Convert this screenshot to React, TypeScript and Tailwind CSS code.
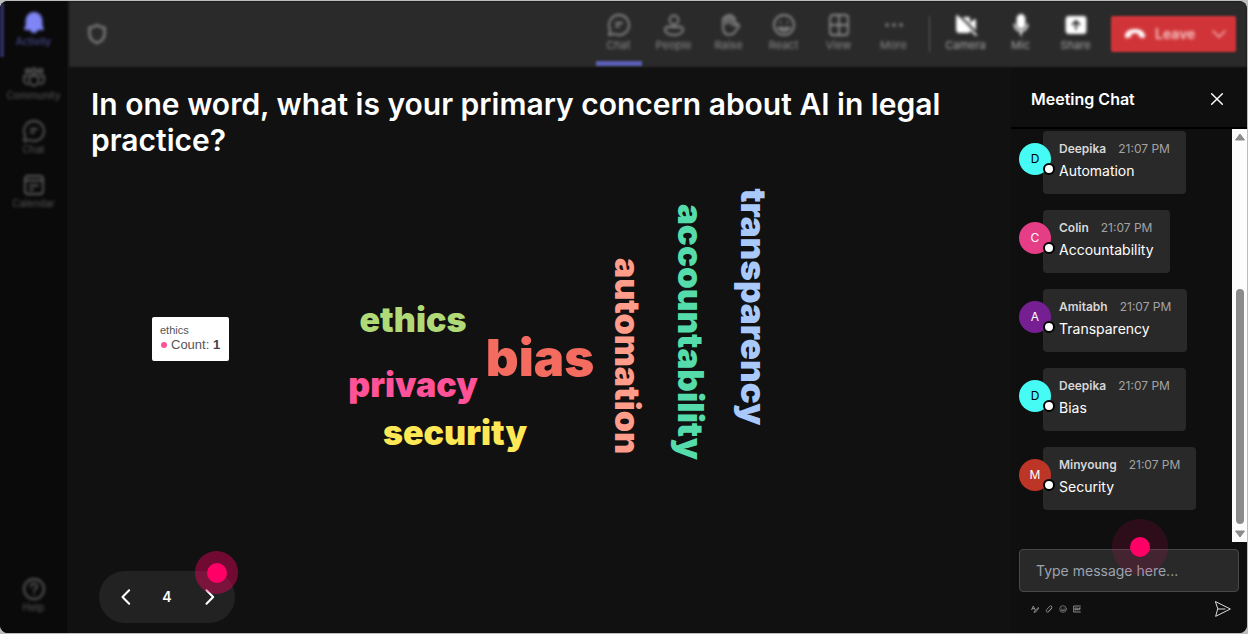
import { ReactNode, useState } from 'react'

type Message = { name: string; text: string; avatar: string }

const messages: Message[] = [
	{ name: 'Deepika', text: 'Automation', avatar: 'bg-[#45fbf3] text-black' },
	{ name: 'Colin', text: 'Accountability', avatar: 'bg-[#e63e86] text-white' },
	{ name: 'Amitabh', text: 'Transparency', avatar: 'bg-[#751f92] text-white' },
	{ name: 'Deepika', text: 'Bias', avatar: 'bg-[#45fbf3] text-black' },
	{ name: 'Minyoung', text: 'Security', avatar: 'bg-[#bd3526] text-white' },
]

// x and y are the centre of each word on its baseline
const words = [
	{ text: 'ethics', x: 322, y: 174, size: 34, color: '#b0da78' },
	{ text: 'privacy', x: 322, y: 239, size: 34, color: '#ff5298' },
	{ text: 'security', x: 364, y: 287, size: 34, color: '#ffe856' },
	{ text: 'bias', x: 449, y: 218, size: 51, color: '#f46b60' },
	{ text: 'automation', x: 524, y: 198, size: 34, color: '#ff9c8a', vertical: true },
	{ text: 'accountability', x: 587, y: 174, size: 35, color: '#55dcaa', vertical: true },
	{ text: 'transparency', x: 650, y: 149, size: 35, color: '#aac9fb', vertical: true },
]

function Icon({ children, className = 'size-6' }: { children: ReactNode; className?: string }) {
	return (
		<svg viewBox="0 0 24 24" className={className} fill="none" stroke="currentColor" strokeWidth="1.8" strokeLinecap="round" strokeLinejoin="round" aria-hidden="true">
			{children}
		</svg>
	)
}

const icons = {
	bell: <path d="M12 2a7.5 7.5 0 0 0-7.5 7.5v5L3 18h6a3 3 0 0 0 6 0h6l-1.500-3.500v-5A7.500 7.500 0 0 0 12 2z" fill="currentColor" />,
	community: (
		<>
			<circle cx="5.500" cy="6" r="2" />
			<circle cx="12" cy="6" r="2.500" />
			<circle cx="18.500" cy="6" r="2" />
			<path d="M7.500 11h9v5a4.500 4.500 0 0 1-9 0zM5 11H2v4a4 4 0 0 0 4 4M19 11h3v4a4 4 0 0 1-4 4" />
		</>
	),
	chat: (
		<>
			<path d="M12 2a10 10 0 1 1-4.700 18.800L2 22l1.200-5.300A10 10 0 0 1 12 2z" />
			<path d="M9 10h6M9 13.500h3" />
		</>
	),
	calendar: (
		<>
			<rect x="3" y="3" width="18" height="18" rx="3" />
			<path d="M3 7.500h18M8 12.500h8M8 16.500h3" />
		</>
	),
	people: (
		<>
			<circle cx="12" cy="7" r="4.500" />
			<path d="M4.500 14h15a2 2 0 0 1 1.500 2c0 4-4 6-9 6s-9-2-9-6a2 2 0 0 1 1.500-2z" />
		</>
	),
	hand: (
		<>
			<path d="M6 13V6a1.500 1.500 0 0 1 3 0V4a1.500 1.500 0 0 1 3 0v-.5a1.500 1.500 0 0 1 3 0V6a1.500 1.500 0 0 1 3 0v7l2-2a1.800 1.800 0 0 1 2 2.500l-4 5.500c-2 3-9 4-11 0-1-2-1-4-1-6z" />
			<path d="M9 5v6M12 5v5M15 6v6" />
		</>
	),
	react: (
		<>
			<circle cx="12" cy="12" r="10" />
			<path d="M8.500 9v.5M15.500 9v.5M6 15h12M7.500 15c1 4 8 4 9 0" />
		</>
	),
	view: (
		<>
			<rect x="3" y="2" width="18" height="20" rx="3" />
			<path d="M12 2v20M3 12h18" />
		</>
	),
	more: <path d="M5 12h.1M12 12h.1M19 12h.1" strokeWidth="3.500" />,
	camera: (
		<>
			<path d="M3 5h12v14H5a2 2 0 0 1-2-2zM17 10l4-3v10l-4-3z" fill="currentColor" />
			<path d="M3 3l19 19" />
			<path d="M6 3l16 16" className="stroke-[#2a2a2a]" />
		</>
	),
	mic: (
		<>
			<rect x="8.500" y="2" width="7" height="13" rx="3.500" fill="currentColor" />
			<path d="M5.500 11.500a6.500 6.500 0 0 0 13 0M12 18v4" />
		</>
	),
	share: (
		<>
			<rect x="2.500" y="4" width="19" height="16" rx="2" fill="currentColor" />
			<path d="M12 16V8M8.500 11.500L12 8l3.500 3.500" className="stroke-[#2a2a2a]" />
		</>
	),
	help: (
		<>
			<circle cx="12" cy="12" r="10" />
			<path d="M9 9.500a3 3 0 1 1 4.500 2.500c-1 .7-1.500 1-1.500 2M12 17v.1" />
		</>
	),
	shield: <path d="M12 3c2 1.500 4.500 2.500 7.500 2.500V12c0 5-3.500 7.500-7.500 9-4-1.500-7.500-4-7.500-9V5.500C7.500 5.500 10 4.500 12 3z" strokeWidth="2.500" />,
}

const railItems = [
	{ label: 'Activity', icon: icons.bell, active: true },
	{ label: 'Community', icon: icons.community },
	{ label: 'Chat', icon: icons.chat },
	{ label: 'Calendar', icon: icons.calendar },
]

const toolbarItems = [
	{ label: 'Chat', icon: icons.chat, active: true },
	{ label: 'People', icon: icons.people },
	{ label: 'Raise', icon: icons.hand },
	{ label: 'React', icon: icons.react },
	{ label: 'View', icon: icons.view },
	{ label: 'More', icon: icons.more },
]

const deviceItems = [
	{ label: 'Camera', icon: icons.camera },
	{ label: 'Mic', icon: icons.mic },
	{ label: 'Share', icon: icons.share },
]

function RailButton({ label, icon, active }: { label: string; icon: ReactNode; active?: boolean }) {
	return (
		<button type="button" className={`flex h-[54px] w-full flex-col items-center border-l-4 pr-1 pt-2 text-[10px] leading-3 ${active ? 'border-[#2e2f66] text-[#5355a8]' : 'border-transparent text-[#5c5c5c]'}`}>
			<span className={`flex blur-[1px] ${active ? 'text-[#7f85f5]' : ''}`}>
				<Icon>{icon}</Icon>
			</span>
			<span className="blur-[1px]">{label}</span>
		</button>
	)
}

function Sidebar() {
	return (
		<nav className="flex w-[67px] shrink-0 flex-col justify-between bg-[#0a0a0a] pb-[10px] pt-[2px]">
			<div className="blur-[1px]">
				{railItems.map(item => <RailButton key={item.label} {...item} />)}
			</div>
			<div className="blur-[1px]">
				<RailButton label="Help" icon={icons.help} />
			</div>
		</nav>
	)
}

function Toolbar() {
	return (
		<header className="flex h-[66px] items-center bg-[#2a2a2a] pl-4 pr-[11px] blur-[1px]">
			<button type="button" aria-label="Privacy" className="text-[#7d7d7d] blur-[1px]">
				<Icon>{icons.shield}</Icon>
			</button>

			<div className="ml-auto flex h-full text-[11px] leading-4 text-[#8c8c8c]">
				{toolbarItems.map(({ label, icon, active }) => (
					<button key={label} type="button" className="flex w-[55px] flex-col items-center pt-3">
						<span className="flex blur-[1px]"><Icon>{icon}</Icon></span>
						<span className="blur-[1px]">{label}</span>
						{active && <span className="mt-2 h-[5px] w-[46px] shrink-0 bg-[#5b5fb5]" />}
					</button>
				))}
			</div>

			<div className="mx-2 h-9 w-px bg-[#585858]" />

			<div className="flex h-full text-[11px] leading-4 text-[#a8a8a8]">
				{deviceItems.map(({ label, icon }) => (
					<button key={label} type="button" className="flex w-[55px] flex-col items-center pt-3">
						<span className="flex text-white blur-[1px]"><Icon>{icon}</Icon></span>
						<span className="blur-[1px]">{label}</span>
					</button>
				))}
			</div>

			<div className="ml-2 flex h-9 w-[125px] rounded-xs bg-[#d13438] text-[#f5c9ca]">
				<button type="button" className="flex flex-1 items-center gap-2 pl-3 text-sm font-semibold blur-[1px]">
					<svg viewBox="0 0 24 12" className="h-3 w-6 text-white" fill="currentColor" aria-hidden="true">
						<path d="M12 1c5 0 9 2 10 6 .4 2-.5 3.500-2 3l-3-.8c-1-.3-1.300-1-1.300-2V6c-2-1-5.400-1-7.400 0v1.200c0 1-.3 1.700-1.300 2L4 10c-1.500.5-2.400-1-2-3 1-4 5-6 10-6z" />
					</svg>
					Leave
				</button>
				<button type="button" aria-label="Leave options" className="px-2 blur-[1px]">
					<Icon className="size-[18px]"><path d="M4 8l8 8 8-8" /></Icon>
				</button>
			</div>
		</header>
	)
}

function WordCloud() {
	return (
		<div className="relative flex-1">
			<svg className="block h-[320px] w-full overflow-visible" role="img" aria-label="Word cloud of answers">
				{words.map(w => (
					<text
						key={w.text}
						x={w.x}
						y={w.y}
						fontSize={w.size}
						fill={w.color}
						textAnchor="middle"
						transform={w.vertical ? `rotate(90 ${w.x} ${w.y})` : undefined}
						className="font-['Arial_Black','Inter',sans-serif] font-black"
					>
						{w.text}
					</text>
				))}
			</svg>

			<div role="tooltip" className="absolute left-[61px] top-[159px] h-11 w-[77px] rounded-xs bg-white pl-2 pt-1 font-['Liberation_Sans',sans-serif] text-[#555]">
				<p className="text-[11px] leading-[18px]">ethics</p>
				<p className="flex items-center text-[13px] leading-3">
					<span className="mx-px mr-1 size-[6px] rounded-full bg-[#ff5298]" />
					Count:&nbsp;<b className="text-[#444]">1</b>
				</p>
			</div>
		</div>
	)
}

function Pager() {
	const [page, setPage] = useState(4)

	return (
		<div className="relative ml-2 flex h-[52px] w-[136px] items-center justify-between rounded-full bg-[#222] px-4 text-white">
			<button type="button" aria-label="Previous" onClick={() => setPage(Math.max(1, page - 1))}>
				<Icon className="size-5"><path d="M17 4l-8 8 8 8" strokeWidth="2.500" /></Icon>
			</button>
			<span className="text-sm font-semibold">{page}</span>
			<button type="button" aria-label="Next" onClick={() => setPage(page + 1)}>
				<Icon className="size-5"><path d="M9 4l8 8-8 8" strokeWidth="2.500" /></Icon>
			</button>
			<span className="pointer-events-none absolute -right-[3px] -top-5 flex size-[43px] items-center justify-center rounded-full bg-[#ff0066]/40">
				<span className="size-5 rounded-full bg-[#ff0066]" />
			</span>
		</div>
	)
}

function ChatMessage({ name, text, avatar }: Message) {
	return (
		<li className="flex">
			<div className={`relative mt-3 flex size-8 shrink-0 items-center justify-center rounded-full text-xs ${avatar}`}>
				{name[0]}
				<span className="absolute -right-1 bottom-0 size-3 rounded-full border-2 border-black bg-white" />
			</div>
			<div className="-ml-2 h-[63px] rounded-sm bg-[#292929] px-4 pt-2">
				<p className="text-xs leading-5 text-[#a3a3a3]">
					<b className="mr-3 font-semibold text-[#d6d6d6]">{name}</b>
					21:07 PM
				</p>
				<p className="text-sm leading-6 text-white">{text}</p>
			</div>
		</li>
	)
}

function ChatPanel() {
	const [draft, setDraft] = useState('')

	return (
		<aside className="flex w-[236px] shrink-0 flex-col bg-[#0f0f0f]">
			<div className="flex h-[62px] items-center justify-between border-b-2 border-black pl-5 pr-[22px] pt-1 text-white">
				<h2 className="text-base font-semibold">Meeting Chat</h2>
				<button type="button" aria-label="Close chat">
					<Icon className="size-4"><path d="M4 4l16 16M20 4L4 20" strokeWidth="2.200" /></Icon>
				</button>
			</div>

			<div className="flex h-[413px]">
				<ul className="flex flex-1 flex-col gap-4 pl-2 pt-[2px]">
					{messages.map((m, i) => <ChatMessage key={i} {...m} />)}
				</ul>
				<div className="flex w-[15px] flex-col items-center justify-between bg-[#fcfcfc] py-1 text-[#8b8b8b]">
					<svg viewBox="0 0 10 8" className="h-2 w-[10px]" fill="currentColor" aria-hidden="true"><path d="M5 1l4.500 6h-9z" stroke="currentColor" strokeLinejoin="round" /></svg>
					<span className="mb-[6px] mt-auto h-[235px] w-2 rounded-full bg-[#8b8b8b]" />
					<svg viewBox="0 0 10 8" className="h-2 w-[10px]" fill="currentColor" aria-hidden="true"><path d="M5 7L.5 1h9z" stroke="currentColor" strokeLinejoin="round" /></svg>
				</div>
			</div>

			<form className="px-2 pt-[7px]" onSubmit={e => e.preventDefault()}>
				<div className="relative">
					<input
						type="text"
						aria-label="Message"
						placeholder="Type message here..."
						value={draft}
						onChange={e => setDraft(e.target.value)}
						className="h-[43px] w-full rounded-sm border border-[#484848] bg-[#292929] px-4 text-sm text-white outline-none placeholder:text-[#9ca3af]"
					/>
					<span className="pointer-events-none absolute -top-[30px] left-[93px] flex size-14 items-center justify-center rounded-full bg-[#ff0066]/12">
						<span className="size-5 rounded-full bg-[#ff0066]" />
					</span>
				</div>
				<div className="flex items-center justify-between pl-3 pr-2 pt-[9px] text-[#a0a0a0]">
					<div className="flex gap-[6px]">
						<button type="button" aria-label="Format">
							<Icon className="size-2"><path d="M2 14L7 3l5 11M4 11h6M22 7L11 18l-2 4 5-1L23 10" strokeWidth="2.500" /></Icon>
						</button>
						<button type="button" aria-label="Attach file">
							<Icon className="size-2"><path d="M20 10l-9 10c-5 4-10-1-6-6l9-10c4-4 9 1 6 5l-9 10" strokeWidth="2.500" /></Icon>
						</button>
						<button type="button" aria-label="Emoji">
							<Icon className="size-2">{icons.react}</Icon>
						</button>
						<button type="button" aria-label="GIF">
							<Icon className="size-2"><path d="M22 3H2v18h20M10 9H6v6h4v-3M14 9v6M22 9h-4v6M18 12h3" strokeWidth="2.500" /></Icon>
						</button>
					</div>
					<button type="submit" aria-label="Send" className="text-[#ddd]">
						<Icon className="size-4"><path d="M1 1l22 11L1 23l3-11zM4 12h11" strokeWidth="1.500" /></Icon>
					</button>
				</div>
			</form>
		</aside>
	)
}

export default function App() {
	return (
		<div className="min-h-screen bg-[#bdbdbd] pb-px pr-px pt-px font-['Inter',sans-serif]">
			<div className="flex min-h-[calc(100vh-2px)] overflow-hidden rounded-lg bg-[#111]">
				<Sidebar />
				<div className="ml-[2px] flex min-w-0 flex-1 flex-col">
					<Toolbar />
					<div className="flex flex-1">
						<main className="flex min-w-0 flex-1 flex-col pb-[10px] pl-[22px] pr-12 pt-[19px]">
							<h1 className="text-3xl font-semibold text-white">
								In one word, what is your primary concern about AI in legal practice?
							</h1>
							<WordCloud />
							<Pager />
						</main>
						<ChatPanel />
					</div>
				</div>
			</div>
		</div>
	)
}
